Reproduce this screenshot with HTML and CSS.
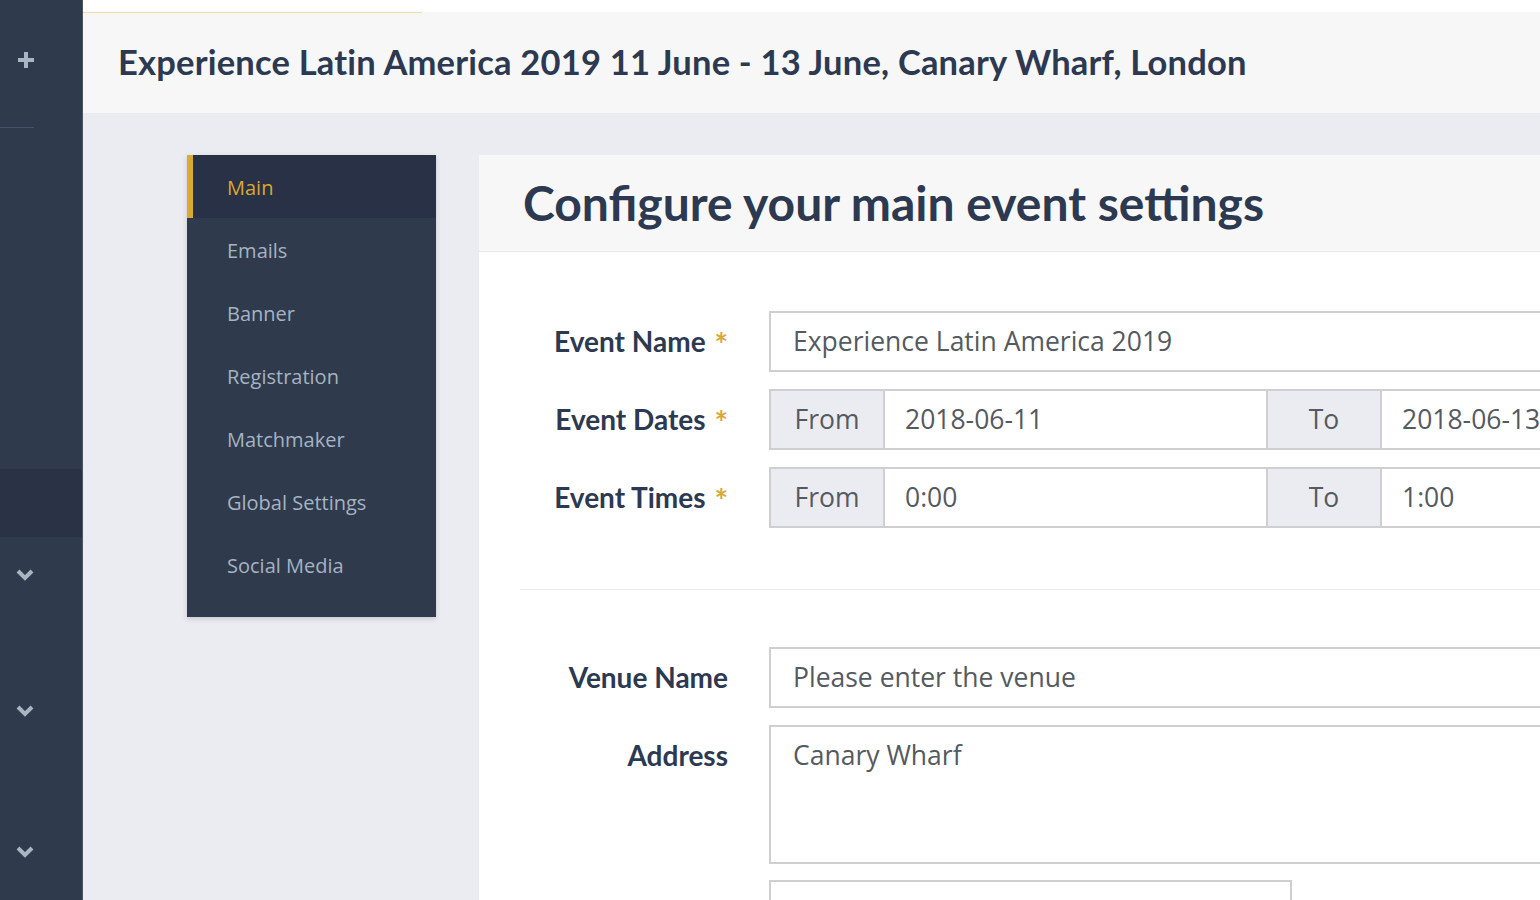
FILE: index.html
```html
<!DOCTYPE html>
<html lang="en">
<head>
<meta charset="utf-8">
<title>Event settings</title>
<link rel="stylesheet" href="styles.css">
</head>
<body>
<div class="app">
  <aside class="rail">
    <div class="rail-add">
      <svg class="rail-plus" width="18" height="18" viewBox="0 0 18 18"><path d="M9 1v16M1 9h16" stroke="#a7b6c2" stroke-width="4" fill="none"/></svg>
    </div>
    <div class="rail-rule"></div>
    <div class="rail-current"></div>
    <div class="rail-group"><svg width="18" height="13" viewBox="0 0 18 13"><path d="M2 3l7 7 7-7" stroke="#a7b6c2" stroke-width="4" fill="none"/></svg></div>
    <div class="rail-group"><svg width="18" height="13" viewBox="0 0 18 13"><path d="M2 3l7 7 7-7" stroke="#a7b6c2" stroke-width="4" fill="none"/></svg></div>
    <div class="rail-group rail-group-last"><svg width="18" height="13" viewBox="0 0 18 13"><path d="M2 3l7 7 7-7" stroke="#a7b6c2" stroke-width="4" fill="none"/></svg></div>
  </aside>
  <main class="main">
    <div class="topbar"></div>
    <div class="progress"><span class="progress-fill"></span></div>
    <header class="page-header">
      <h1 class="page-title">Experience Latin America 2019 11 June - 13 June, Canary Wharf, London</h1>
    </header>
    <div class="workspace">
      <nav class="subnav">
        <a class="subnav-item is-active">Main</a>
        <a class="subnav-item">Emails</a>
        <a class="subnav-item">Banner</a>
        <a class="subnav-item">Registration</a>
        <a class="subnav-item">Matchmaker</a>
        <a class="subnav-item">Global Settings</a>
        <a class="subnav-item">Social Media</a>
      </nav>
      <section class="card">
        <div class="card-head">
          <h2 class="card-title">Configure your main event settings</h2>
        </div>
        <div class="card-body">
          <div class="form-section">
            <div class="field">
              <label class="field-label">Event Name <span class="req">*</span></label>
              <div class="field-control"><div class="input">Experience Latin America 2019</div></div>
            </div>
            <div class="field">
              <label class="field-label">Event Dates <span class="req">*</span></label>
              <div class="field-control">
                <div class="input-group">
                  <span class="addon">From</span>
                  <span class="group-input group-input-first">2018-06-11</span>
                  <span class="addon">To</span>
                  <span class="group-input">2018-06-13</span>
                </div>
              </div>
            </div>
            <div class="field">
              <label class="field-label">Event Times <span class="req">*</span></label>
              <div class="field-control">
                <div class="input-group">
                  <span class="addon">From</span>
                  <span class="group-input group-input-first">0:00</span>
                  <span class="addon">To</span>
                  <span class="group-input">1:00</span>
                </div>
              </div>
            </div>
          </div>
          <div class="divider"></div>
          <div class="form-section form-section-second">
            <div class="field">
              <label class="field-label">Venue Name</label>
              <div class="field-control"><div class="input">Please enter the venue</div></div>
            </div>
            <div class="field">
              <label class="field-label">Address</label>
              <div class="field-control">
                <div class="input textarea">Canary Wharf</div>
                <div class="input input-short"></div>
              </div>
            </div>
          </div>
        </div>
      </section>
    </div>
  </main>
</div>
</body>
</html>
```

FILE: styles.css
```css
html, body {
  margin: 0;
  padding: 0;
  height: 100%;
}
body {
  font-family: "Open Sans", "Noto Sans", sans-serif;
  background: #ebecf1;
  overflow: hidden;
}
.app {
  display: flex;
  height: 900px;
  width: 1540px;
  overflow: hidden;
}

/* left rail */
.rail {
  width: 82px;
  flex: 0 0 82px;
  background: #2f3a4d;
  border-right: 1px solid #4b5567;
  display: flex;
  flex-direction: column;
  overflow: hidden;
}
.rail > * {
  flex-shrink: 0;
}
.rail-add {
  height: 120px;
  display: flex;
  align-items: center;
  justify-content: flex-start;
  padding-left: 17px;
  box-sizing: border-box;
}
.rail-rule {
  margin-top: 7px;
  width: 34px;
  height: 1px;
  background: #46526a;
}
.rail-current {
  margin-top: 341px;
  height: 68px;
  background: #2a3345;
}
.rail-group {
  height: 136px;
  padding-left: 16px;
  padding-top: 31px;
  box-sizing: border-box;
}
.rail-group + .rail-group + .rail-group {
  padding-top: 36px;
}
.rail-group svg { display: block; }

/* main */
.main {
  flex: 1;
  min-width: 0;
  display: flex;
  flex-direction: column;
  background: #ebecf1;
  overflow: hidden;
}
.main > * {
  flex-shrink: 0;
}
.topbar {
  height: 12px;
  background: #ffffff;
}
.progress {
  height: 1px;
  background: #f7f7f7;
}
.progress-fill {
  display: block;
  width: 339px;
  height: 1px;
  background: #f1dba4;
}
.page-header {
  height: 100px;
  box-sizing: border-box;
  padding-bottom: 3px;
  background: #f7f7f7;
  display: flex;
  align-items: center;
  padding-left: 35px;
}
.page-title {
  margin: 0;
  font-family: "Lato", "Open Sans", sans-serif;
  font-weight: 700;
  font-size: 34.5px;
  color: #2c3950;
  letter-spacing: 0.2px;
  white-space: nowrap;
}

.workspace {
  display: flex;
  align-items: flex-start;
  gap: 43px;
  padding: 42px 0 0 104px;
}

/* sub navigation */
.subnav {
  flex: 0 0 249px;
  width: 249px;
  background: #2f3a4d;
  padding-bottom: 21px;
  box-shadow: 0 2px 5px rgba(30, 40, 60, 0.18);
  display: flex;
  flex-direction: column;
}
.subnav-item {
  display: block;
  height: 63px;
  line-height: 65px;
  padding-left: 40px;
  font-size: 20px;
  color: #a5b3c2;
  text-decoration: none;
}
.subnav-item.is-active {
  background: #283145;
  border-left: 6px solid #d8a935;
  padding-left: 34px;
  color: #dba830;
}

/* card */
.card {
  flex: 0 0 1200px;
  width: 1200px;
  background: #ffffff;
  min-height: 800px;
}
.card-head {
  height: 97px;
  box-sizing: border-box;
  padding-bottom: 2px;
  background: #f7f7f7;
  border-bottom: 1px solid #e8e9ee;
  display: flex;
  align-items: center;
  padding-left: 44px;
}
.card-title {
  margin: 0;
  font-family: "Lato", "Open Sans", sans-serif;
  font-weight: 700;
  font-size: 48px;
  color: #2c3950;
  white-space: nowrap;
}
.card-body {
  padding-left: 41px;
}
.form-section {
  padding-top: 59px;
  padding-bottom: 44px;
}
.form-section-second {
  padding-top: 57px;
}
.divider {
  height: 1px;
  background: #ececef;
}
.field {
  display: flex;
  align-items: flex-start;
  gap: 41px;
  margin-bottom: 17px;
}
.field-label {
  flex: 0 0 208px;
  height: 61px;
  text-align: right;
  font-family: "Lato", "Open Sans", sans-serif;
  font-weight: 700;
  font-size: 28px;
  line-height: 61px;
  color: #2c3950;
  white-space: nowrap;
}
.req {
  color: #d8a935;
  font-size: 32px;
  line-height: 0;
  position: relative;
  top: 5px;
  margin-left: 2px;
}
.field-control {
  flex: 1;
  display: flex;
  flex-direction: column;
  gap: 16px;
}
.input {
  height: 61px;
  box-sizing: border-box;
  border: 2px solid #cfcfd2;
  padding: 0 22px;
  font-size: 26.5px;
  line-height: 57px;
  color: #555a60;
  background: #fff;
  white-space: nowrap;
}
.textarea {
  height: 139px;
}
.input-short {
  width: 523px;
}
.input-group {
  display: flex;
  height: 61px;
  box-sizing: border-box;
  border: 2px solid #cfcfd2;
  font-size: 26.5px;
  line-height: 57px;
  color: #555a60;
}
.addon {
  flex: 0 0 112px;
  text-align: center;
  background: #ebecf1;
  border-right: 2px solid #cfcfd2;
}
.group-input {
  padding-left: 20px;
  white-space: nowrap;
  flex: 1;
}
.group-input-first {
  flex: 0 0 361px;
  border-right: 2px solid #cfcfd2;
}
```
